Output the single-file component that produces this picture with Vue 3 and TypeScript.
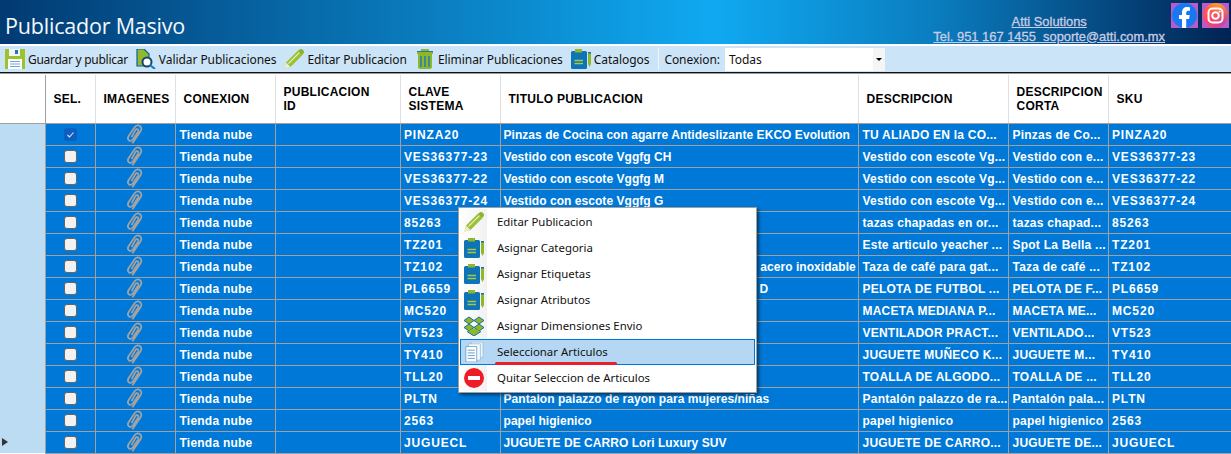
<script setup lang="ts">
interface Row { clave: string; titulo: string; desc: string; corta: string; checked?: boolean; current?: boolean }
const columns = [
  { label: 'SEL.', width: 50 }, { label: 'IMAGENES', width: 80 }, { label: 'CONEXION', width: 100 },
  { label: 'PUBLICACION ID', width: 125, wrap: true }, { label: 'CLAVE SISTEMA', width: 100, wrap: true }, { label: 'TITULO PUBLICACION', width: 358 },
  { label: 'DESCRIPCION', width: 150 }, { label: 'DESCRIPCION CORTA', width: 100, wrap: true }, { label: 'SKU', width: 123 },
]
const rows: Row[] = [
  { clave: 'PINZA20', titulo: 'Pinzas de Cocina con agarre Antideslizante EKCO Evolution', desc: 'TU ALIADO EN la CO...', corta: 'Pinzas de Co...', checked: true },
  { clave: 'VES36377-23', titulo: 'Vestido con escote Vggfg CH', desc: 'Vestido con escote Vg...', corta: 'Vestido con e...' },
  { clave: 'VES36377-22', titulo: 'Vestido con escote Vggfg M', desc: 'Vestido con escote Vg...', corta: 'Vestido con e...' },
  { clave: 'VES36377-24', titulo: 'Vestido con escote Vggfg G', desc: 'Vestido con escote Vg...', corta: 'Vestido con e...' },
  { clave: '85263', titulo: 'Tazas chapadas en oro', desc: 'tazas chapadas en or...', corta: 'tazas chapad...' },
  { clave: 'TZ201', titulo: 'Spot La Bella', desc: 'Este articulo yeacher ...', corta: 'Spot La Bella ...' },
  { clave: 'TZ102', titulo: 'Taza de café para gato de cerámica y asa de acero inoxidable', desc: 'Taza de café para gat...', corta: 'Taza de café ...' },
  { clave: 'PL6659', titulo: 'PELOTA DE FUTBOL SOCCER NUMERO 5 L D', desc: 'PELOTA DE FUTBOL ...', corta: 'PELOTA DE F...' },
  { clave: 'MC520', titulo: 'Maceta mediana', desc: 'MACETA MEDIANA P...', corta: 'MACETA ME...' },
  { clave: 'VT523', titulo: 'Ventilador practico', desc: 'VENTILADOR PRACT...', corta: 'VENTILADO...' },
  { clave: 'TY410', titulo: 'Juguete muñeco', desc: 'JUGUETE MUÑECO K...', corta: 'JUGUETE M...' },
  { clave: 'TLL20', titulo: 'Toalla de algodon', desc: 'TOALLA DE ALGODO...', corta: 'TOALLA DE ...' },
  { clave: 'PLTN', titulo: 'Pantalon palazzo de rayon para mujeres/niñas', desc: 'Pantalón palazzo de ra...', corta: 'Pantalón pala...' },
  { clave: '2563', titulo: 'papel higienico', desc: 'papel higienico', corta: 'papel higienico' },
  { clave: 'JUGUECL', titulo: 'JUGUETE DE CARRO Lori Luxury SUV', desc: 'JUGUETE DE CARRO...', corta: 'JUGUETE DE...', current: true },
]
const tools = [
  { icon: 'i-save', label: 'Guardar y publicar' }, { icon: 'i-check', label: 'Validar Publicaciones' },
  { icon: 'i-pencil', label: 'Editar Publicacion' }, { icon: 'i-trash', label: 'Eliminar Publicaciones' },
  { icon: 'i-clip', label: 'Catalogos' },
]
const menu = [
  { icon: 'i-pencil', label: 'Editar Publicacion' }, { icon: 'i-clip', label: 'Asignar Categoria' },
  { icon: 'i-clip', label: 'Asignar Etiquetas' }, { icon: 'i-clip', label: 'Asignar Atributos' },
  { icon: 'i-box', label: 'Asignar Dimensiones Envio' }, { icon: 'i-docs', label: 'Seleccionar Articulos', active: true },
  { icon: 'i-stop', label: 'Quitar Seleccion de Articulos' },
]
</script>

<template>
  <div class="app">
    <svg class="defs" aria-hidden="true">
      <symbol id="i-save" viewBox="0 0 20 20">
        <path d="M0 0h20v20H0z" fill="#9cc22e"/><path d="M4 0h11v7H4z" fill="#f4f4f4"/><path d="M10 1h3v4h-3z" fill="#1b79c0"/>
        <path d="M3 10h14v10H3z" fill="#fff"/><path d="M5 12.500h10M5 15h10M5 17.500h10" stroke="#6ea7d8"/>
      </symbol>
      <symbol id="i-check" viewBox="0 0 20 20">
        <path d="M1 0h7l5 5v9H8v3H1z" fill="#92b82c" stroke="#0d5f9f" stroke-width="1.200"/>
        <circle cx="11" cy="13" r="4.500" fill="#fff" stroke="#12486f" stroke-width="2"/>
        <path d="m14 16 5 4" stroke="#1877c0" stroke-width="2"/>
      </symbol>
      <symbol id="i-pencil" viewBox="0 0 20 20">
        <path d="M.500 19.500 2 13.500 14 1.500 18.500 6 6.500 18z" fill="#9bc034"/>
        <path d="M.500 19.500 2 13.500 6.500 18z" fill="#e9f1cd"/>
        <path d="M4.500 14.500 15.500 3.500" stroke="#e3eec0" stroke-width="1.100"/>
        <path d="M15 1a2.600 2.600 0 0 1 4 4L18 6 14 2z" fill="#8cb32a"/>
      </symbol>
      <symbol id="i-trash" viewBox="0 0 16 20">
        <path d="M4 0h8v2H4zM0 2h16v3H0z" fill="#8fb827"/>
        <path d="M1 5h14v13.500L13.500 20h-11L1 18.500z" fill="#8fb827"/>
        <path d="M4 7v11M8 7v11M12 7v11" stroke="#2a7db5" stroke-width="1.600"/>
        <path d="M0 2h16v1H0z" fill="#1b79b8"/>
      </symbol>
      <symbol id="i-clip" viewBox="0 0 20 20">
        <path d="M1.500 2H14.500a1.500 1.500 0 0 1 1.500 1.500V18.500a1.500 1.500 0 0 1-1.500 1.500H1.500A1.500 1.500 0 0 1 0 18.500V3.500A1.500 1.500 0 0 1 1.500 2z" fill="#0e73b7"/>
        <path d="M4 0h7v3.500H4z" fill="#8fb827"/>
        <path d="M3.500 11.500h8.500M3.500 14.500h8.500" stroke="#a5c93c" stroke-width="1.300"/>
        <path d="M17 4h3v11l-1.500 3-1.500-3z" fill="#8fb827"/><path d="M17 3h3v1.500h-3z" fill="#0e73b7"/>
      </symbol>
      <symbol id="i-box" viewBox="0 0 20 20">
        <path d="M5 1 10 4.500 5 8 0 4.500zM15 1 20 4.500 15 8 10 4.500zM5 8l5 3.500L5 15 0 11.500zM15 8l5 3.500L15 15l-5-3.500z" fill="#8fb827" stroke="#136ea8"/>
        <path d="M3 15.500 10 20l7-4.500-7-3z" fill="#8fb827"/><path d="M3 15.500 10 20l7-4.500" stroke="#136ea8" fill="none"/>
      </symbol>
      <symbol id="i-docs" viewBox="0 0 20 22">
        <path d="M7 0h13v17H7z" fill="#eef5fb" stroke="#9cc0dc"/><path d="M4 2h13v18H4z" fill="#f6fafd" stroke="#9cc0dc"/>
        <path d="M1 5h12v17H1z" fill="#fff" stroke="#6fa3cc"/>
        <path d="M3 9h8M3 12h8M3 15h8M3 18h8" stroke="#5c99c9"/>
      </symbol>
      <symbol id="i-stop" viewBox="0 0 20 20">
        <circle cx="10" cy="10" r="10" fill="#ee1c25"/><path d="M4 8h12v4H4z" fill="#fff"/>
      </symbol>
      <symbol id="i-paper" viewBox="0 0 20 24">
        <path d="M7 22 16.200 8.500c1.500-2.500 1-5-.8-6.300-1.900-1.300-4.300-.6-5.800 1.600L2.600 14c-1.100 1.900-.9 3.800.6 4.800 1.500 1 3.300.4 4.500-1.300l5.800-8.600c.7-1.100.5-2.300-.3-2.800-.9-.6-2-.2-2.700.9L6 15" fill="none" stroke="#a3a3a3" stroke-width="2"/>
      </symbol>
    </svg>

    <header class="banner">
      <h1>Publicador Masivo</h1>
      <div class="contact">
        <a>Atti Solutions</a>
        <a>Tel. 951 167 1455&nbsp;&nbsp;soporte@atti.com.mx</a>
      </div>
      <div class="social">
        <div class="tile">
          <svg viewBox="0 0 27 25" width="27" height="25">
            <circle cx="13.500" cy="12.500" r="12.500" fill="#1778f2"/>
            <path d="M11 25V16H8v-4h3V9.500C11 6 13 4 16.200 4c1.300 0 2.800.3 2.800.3v3.400h-1.700c-1.600 0-2.100 1-2.100 2V12h3.500l-.6 4H15.200v9z" fill="#fff"/>
          </svg>
        </div>
        <div class="tile">
          <svg viewBox="0 0 27 25" width="27" height="25">
            <defs><linearGradient id="ig" x1="0.100" y1="1" x2="0.800" y2="0"><stop offset="0" stop-color="#ff3d7c"/><stop offset=".55" stop-color="#fb5b4a"/><stop offset="1" stop-color="#ffb41f"/></linearGradient>
            <linearGradient id="ig2" x1="1" y1="1" x2="0.300" y2="0.300"><stop offset="0" stop-color="#a03ee0"/><stop offset="1" stop-color="#ff4060" stop-opacity="0"/></linearGradient></defs>
            <circle cx="13.500" cy="12.500" r="12.500" fill="url(#ig)"/><circle cx="13.500" cy="12.500" r="12.500" fill="url(#ig2)"/>
            <rect x="6.500" y="5.500" width="14" height="14" rx="4" fill="none" stroke="#fff" stroke-width="2"/>
            <circle cx="13.500" cy="12.500" r="3.300" fill="none" stroke="#fff" stroke-width="2"/><circle cx="17.600" cy="8.400" r="1" fill="#fff"/>
          </svg>
        </div>
      </div>
    </header>

    <nav class="toolbar">
      <button v-for="t in tools" :key="t.label" class="tool">
        <svg class="tool-icon"><use :href="'#' + t.icon"/></svg>
        <span>{{ t.label }}</span>
      </button>
      <span class="sep"></span>
      <label class="conn">Conexion:</label>
      <div class="select"><span>Todas</span><i class="drop"></i></div>
    </nav>

    <main class="grid-wrap">
      <table class="grid">
        <colgroup>
          <col class="head-col"/>
          <col v-for="c in columns" :key="c.label" :style="{ width: c.width + 'px' }"/>
        </colgroup>
        <thead>
          <tr>
            <th class="corner"></th>
            <th v-for="c in columns" :key="c.label"><div class="th-in" :class="{ wrap: c.wrap }">{{ c.label }}</div></th>
          </tr>
        </thead>
        <tbody>
          <tr v-for="r in rows" :key="r.clave">
            <th class="rowhead"><i v-if="r.current" class="cur"></i></th>
            <td class="ctr"><span class="box" :class="{ on: r.checked }"><svg v-if="r.checked" viewBox="0 0 13 13" width="13" height="13"><path d="m3.500 7 2 2 4-4.500" fill="none" stroke="#d8e8f8" stroke-width="1.100"/></svg></span></td>
            <td class="ctr"><svg class="clip"><use href="#i-paper"/></svg></td>
            <td>Tienda nube</td>
            <td></td>
            <td class="code">{{ r.clave }}</td>
            <td class="title">{{ r.titulo }}</td>
            <td>{{ r.desc }}</td>
            <td>{{ r.corta }}</td>
            <td class="code">{{ r.clave }}</td>
          </tr>
        </tbody>
      </table>

      <ul class="menu">
        <li v-for="m in menu" :key="m.label" :class="{ active: m.active }">
          <span class="gutter"><svg class="menu-icon"><use :href="'#' + m.icon"/></svg></span>
          <span class="menu-text">{{ m.label }}</span>
        </li>
        <li class="mark" aria-hidden="true"></li>
      </ul>
    </main>
  </div>
</template>

<style>
html, body { margin: 0; overflow: hidden; background: #fff; }
</style>

<style scoped>
.app { width: 1231px; height: 454px; overflow: hidden; display: flex; flex-direction: column; font-family: "Liberation Sans", Arial, sans-serif; }
.defs { width: 0; height: 0; position: absolute; }
.banner { height: 44px; flex: none; display: flex; justify-content: flex-end; position: relative; background: linear-gradient(90deg, #023a72 0%, #0a7dbf 35%, #10a9f1 58%, #0a7dbf 76%, #012353 100%); }
h1 { margin: 0 auto 0 5px; padding-top: 13px; font: 400 21.500px/26px "Open Sans", sans-serif; letter-spacing: -.2px; color: #f4f8fc; }
.contact { display: flex; flex-direction: column; align-items: center; padding: 15px 6px 0 0; font-size: 12.900px; line-height: 14.500px; color: #c9cde6; }
.contact a { text-decoration: underline; -webkit-text-stroke: .3px #c9cde6; }
.social { display: flex; gap: 4px; padding: 3px 2px 0 0; }
.tile { width: 27px; height: 25px; background: #b45ccc; display: flex; }
.toolbar { height: 26px; margin-top: 2px; flex: none; display: flex; align-items: center; padding-left: 5px; background: #cce4f7; border-bottom: 1px solid #111; box-shadow: 0 1px 0 #999; font: 12px "Noto Sans", sans-serif; letter-spacing: -.06px; color: #111; }
.tool { all: unset; display: flex; align-items: center; gap: 3px; margin-right: 8px; white-space: nowrap; }
.tool:first-child span { letter-spacing: -.28px; }
.tool-icon { width: 20px; height: 20px; flex: none; }
.sep { width: 1px; height: 22px; background: #f4f4f4; margin: 0 5px 0 1px; }
.conn { margin-right: 5px; }
.select { width: 160px; height: 23px; box-sizing: border-box; background: #fff; display: flex; align-items: center; justify-content: space-between; padding-left: 4px; }
.drop { width: 12px; height: 23px; background: #f5f5f5; position: relative; }
.drop::after { content: ""; position: absolute; left: 3px; top: 10px; border: 3px solid transparent; border-top: 3px solid #000; border-bottom: 0; }
.grid-wrap { position: relative; flex: none; margin-top: 2px; }
.grid { border-collapse: collapse; table-layout: fixed; width: 1231px; font-size: 12px; color: #fff; }
.head-col { width: 45px; }
thead th { height: 48px; padding: 0; background: #fff; color: #000; text-align: left; font-weight: 700; font-size: 12px; line-height: 14px; border-right: 1px solid #e0e0e0; border-bottom: 1px solid #a0a0a0; box-sizing: border-box; }
thead th.corner { border-right: 1px solid #a0a0a0; }
.th-in { padding: 0 8px; letter-spacing: .25px; }
.th-in.wrap { width: min-content; }
tbody tr { height: 22px; }
tbody td { height: 22px; padding: 2px 4px 0; line-height: 15px; background: #0078d7; font-weight: 700; white-space: nowrap; overflow: hidden; border-right: 1px solid #a0a0a0; border-bottom: 1px solid #a0a0a0; box-sizing: border-box; letter-spacing: .23px; }
tbody td.code { padding-left: 3.500px; letter-spacing: .85px; }
tbody td.title { padding-left: 3px; letter-spacing: .05px; }
.rowhead { padding: 0; background: #bcdcf4; border-right: 1px solid #a0a0a0; position: relative; }
.cur { position: absolute; left: 2px; top: 7px; border-left: 6px solid #333; border-top: 4px solid transparent; border-bottom: 4px solid transparent; }
tbody td.ctr { padding: 0; text-align: center; line-height: 0; }
.box { display: inline-block; width: 13px; height: 13px; border-radius: 3px; box-sizing: border-box; background: #f2f2f2; border: 1px solid #666; vertical-align: middle; }
.box.on { background: #0a5fc0; border-color: #0a5fc0; }
.box.on svg { margin: -1px; display: block; }
.clip { display: block; width: 20px; height: 21px; margin: 0 auto -1px; }
.menu { position: absolute; left: 458px; top: 132px; width: 299px; margin: 0; padding: 1px; box-sizing: border-box; list-style: none; background: #fff; border: 1px solid #a0a0a0; box-shadow: 2px 2px 3px rgba(0,0,0,.5); font: 11.400px "Noto Sans", sans-serif; color: #111; }
.menu li { height: 26px; display: flex; align-items: center; box-sizing: border-box; }
.menu li.active { background: #b5d7f3; outline: 1px solid #0078d7; outline-offset: -1px; }
.gutter { width: 27px; height: 100%; flex: none; background: linear-gradient(90deg, #fff, #f1f1f1); display: flex; align-items: center; justify-content: center; }
.active .gutter { background: none; }
.menu-icon { width: 20px; height: 20px; }
.menu-text { margin-left: 10px; padding-bottom: 2px; }
.menu li.mark { position: absolute; left: 36px; top: 154px; width: 122px; height: 3px; border-radius: 2px; background: #e8202a; }
</style>
